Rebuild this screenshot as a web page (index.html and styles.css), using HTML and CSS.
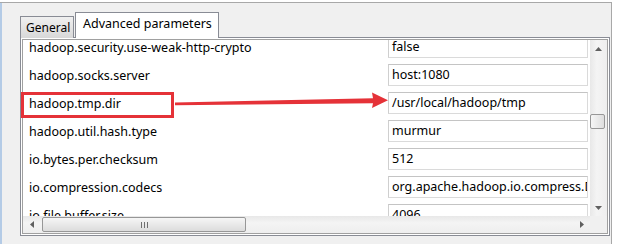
FILE: index.html
```html
<!DOCTYPE html>
<html lang="en">
<head>
    <meta charset="UTF-8">
    <title>Advanced parameters</title>
    <link rel="stylesheet" href="styles.css">
</head>
<body>
    <div class="frame">
        <div class="edge"></div>
        <div class="dialog">
            <div class="tabs">
                <div class="tab">General</div>
                <div class="tab active">Advanced parameters</div>
            </div>
            <div class="pane">
                <div class="list">
                    <div class="top-part">
                        <div class="viewport">
                            <div class="rows">
                                <div class="row"><div class="name">hadoop.security.use-weak-http-crypto</div><div class="val">false</div></div>
                                <div class="row"><div class="name">hadoop.socks.server</div><div class="val">host:1080</div></div>
                                <div class="row"><div class="name">hadoop.tmp.dir</div><div class="val">/usr/local/hadoop/tmp</div></div>
                                <div class="row"><div class="name">hadoop.util.hash.type</div><div class="val">murmur</div></div>
                                <div class="row"><div class="name">io.bytes.per.checksum</div><div class="val">512</div></div>
                                <div class="row"><div class="name">io.compression.codecs</div><div class="val">org.apache.hadoop.io.compress.DefaultCodec,org.apache.hadoop.io.compress.GzipCodec</div></div>
                                <div class="row"><div class="name">io.file.buffer.size</div><div class="val">4096</div></div>
                            </div>
                        </div>
                        <div class="vscroll">
                            <div class="btn">
                                <svg width="7" height="4" viewBox="0 0 7 4"><path d="M0 4 L3.5 0 L7 4 Z" fill="#606060"/></svg>
                            </div>
                            <div class="vtrack">
                                <div class="vthumb"></div>
                            </div>
                            <div class="btn">
                                <svg width="7" height="4" viewBox="0 0 7 4"><path d="M0 0 L3.5 4 L7 0 Z" fill="#606060"/></svg>
                            </div>
                        </div>
                    </div>
                    <div class="bottom-part">
                        <div class="hscroll">
                            <div class="btn">
                                <svg width="4" height="7" viewBox="0 0 4 7"><path d="M4 0 L0 3.5 L4 7 Z" fill="#606060"/></svg>
                            </div>
                            <div class="htrack">
                                <div class="hthumb"><span></span><span></span><span></span></div>
                            </div>
                            <div class="btn">
                                <svg width="4" height="7" viewBox="0 0 4 7"><path d="M0 0 L4 3.5 L0 7 Z" fill="#606060"/></svg>
                            </div>
                        </div>
                        <div class="corner"></div>
                    </div>
                </div>
            </div>
        </div>
    </div>

    <!-- annotation drawn over the screenshot -->
    <div class="mark"></div>
    <svg class="arrow" width="618" height="244" viewBox="0 0 618 244">
        <polygon points="175,102.6 373,98.2 372,92.5 388,100.3 372,108 373,103.2 175,105.2" fill="#e53238"/>
    </svg>
</body>
</html>
```

FILE: styles.css
```css
body {
	margin: 0;
	width: 618px;
	height: 244px;
	overflow: hidden;
	background: #ffffff;
	font-family: "Noto Sans", "Liberation Sans", sans-serif;
	font-size: 12.5px;
	color: #000000;
}

.frame {
	display: flex;
	margin-top: 2px;
	width: 612px;
	height: 242px;
	box-sizing: border-box;
	border-top: 1px solid #a8a8a8;
	border-right: 1px solid #a8a8a8;
}

.edge {
	width: 2px;
	background: #b4cbe6;
}

.dialog {
	flex: 1;
	background: #f0f0f0;
	padding: 10px 0 0 18px;
}

/* tabs */
.tabs {
	display: flex;
	align-items: flex-end;
	gap: 1px;
	height: 25px;
	margin-bottom: -1px;
	font-size: 12px;
}

.tab {
	width: 54px;
	height: 22px;
	box-sizing: border-box;
	padding: 0 0 0 5px;
	line-height: 22px;
	white-space: nowrap;
	overflow: hidden;
	border: 1px solid #898c95;
	border-bottom: none;
	background: linear-gradient(#f0f0f0, #d8d8d8);
}

.tab.active {
	position: relative;
	z-index: 1;
	height: 26px;
	width: 144px;
	padding: 0 0 0 7px;
	line-height: 22px;
	font-size: 12.5px;
	background: #ffffff;
	border-color: #898c95;
}

/* pane */
.pane {
	width: 590px;
	height: 199px;
	box-sizing: border-box;
	border: 1px solid #898c95;
	padding: 1px;
	background: #ffffff;
}

.list {
	display: flex;
	flex-direction: column;
	height: 100%;
	box-sizing: border-box;
	border: 1px solid #a0a0a0;
}

.top-part {
	display: flex;
	flex: 1;
	min-height: 0;
}

.viewport {
	flex: 1;
	overflow: hidden;
	background: #ffffff;
}

.rows {
	margin-top: -7px;
}

.row {
	display: flex;
	align-items: center;
	height: 28px;
}

.name {
	width: 365px;
	padding-left: 6px;
	box-sizing: border-box;
	white-space: nowrap;
}

.val {
	width: 200px;
	height: 22px;
	flex-shrink: 0;
	box-sizing: border-box;
	padding-left: 3px;
	line-height: 20px;
	border: 1px solid #dadada;
	border-top-color: #c4c4c4;
	border-left-color: #cfcfcf;
	white-space: nowrap;
	overflow: hidden;
}

/* scrollbars */
.vscroll {
	display: flex;
	flex-direction: column;
	width: 17px;
	background: linear-gradient(to right, #e8e8e8, #f4f4f4 40%, #eeeeee);
}

.btn {
	display: flex;
	align-items: center;
	justify-content: center;
	width: 17px;
	height: 17px;
	flex-shrink: 0;
}

.vtrack {
	flex: 1;
}

.vthumb {
	width: 15px;
	height: 15px;
	margin-top: 57px;
	box-sizing: border-box;
	border: 1px solid #979797;
	border-radius: 2px;
	background: linear-gradient(to right, #f6f6f6, #dedede);
}

.bottom-part {
	display: flex;
	height: 17px;
}

.hscroll {
	display: flex;
	flex: 1;
	background: linear-gradient(#e8e8e8, #f4f4f4 40%, #eeeeee);
}

.htrack {
	flex: 1;
	padding-top: 1px;
}

.hthumb {
	display: flex;
	justify-content: center;
	align-items: center;
	gap: 2px;
	width: 204px;
	height: 15px;
	margin-left: 2px;
	box-sizing: border-box;
	border: 1px solid #979797;
	border-radius: 2px;
	background: linear-gradient(#f6f6f6, #dcdcdc);
}

.hthumb span {
	width: 1px;
	height: 6px;
	background: #707070;
}

.corner {
	width: 17px;
	background: #f0f0f0;
}

/* red annotation */
.mark {
	position: absolute;
	left: 21px;
	top: 92px;
	width: 153px;
	height: 26px;
	box-sizing: border-box;
	border: 3px solid #e53238;
}

.arrow {
	position: absolute;
	left: 0;
	top: 0;
}
```
